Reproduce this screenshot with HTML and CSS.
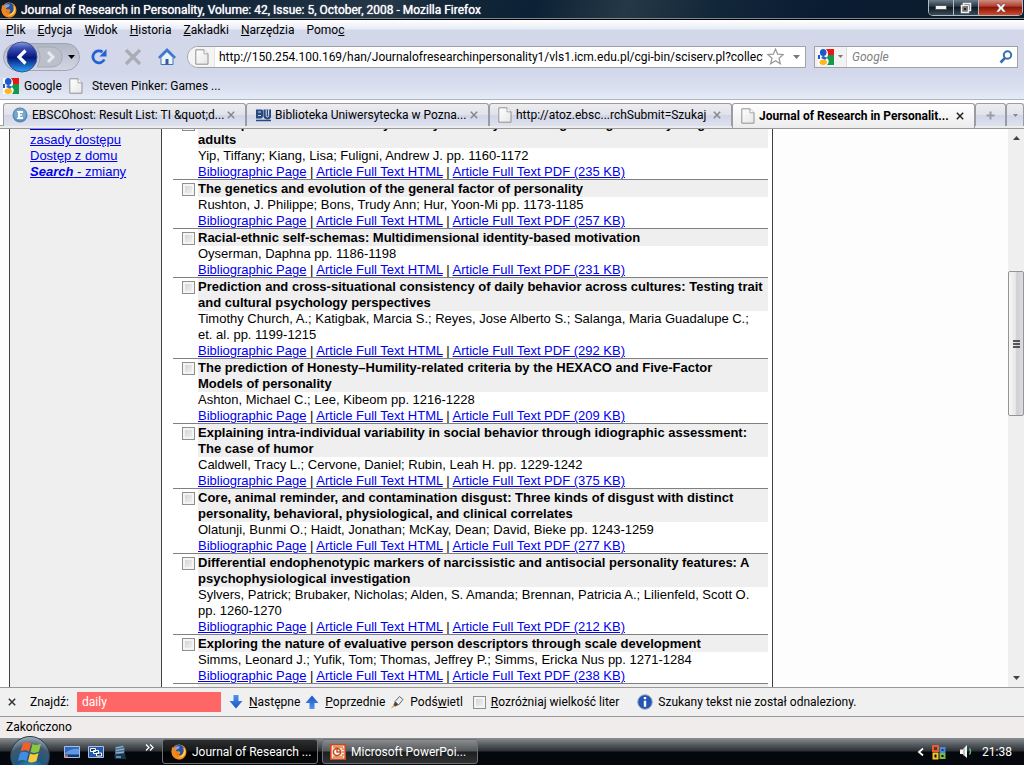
FILE: index.html
```html
<!DOCTYPE html>
<html lang="pl">
<head>
<meta charset="utf-8">
<title>Journal of Research in Personality</title>
<link rel="stylesheet" href="styles.css">
</head>
<body>
<svg width="0" height="0" class="defs" aria-hidden="true">
  <defs>
    <linearGradient id="pg" x1="0" y1="0" x2="1" y2="1"><stop offset="0" stop-color="#fff"/><stop offset="1" stop-color="#e6e6e6"/></linearGradient>
    <radialGradient id="ffg" cx=".6" cy=".2" r=".9"><stop offset="0" stop-color="#ffc83a"/><stop offset=".5" stop-color="#ee7a18"/><stop offset="1" stop-color="#c43c08"/></radialGradient>
    <linearGradient id="blue" x1="0" y1="0" x2="0" y2="1"><stop offset="0" stop-color="#4f95ee"/><stop offset="1" stop-color="#1a4fc0"/></linearGradient>
    <linearGradient id="back" x1="0" y1="0" x2="0" y2="1"><stop offset="0" stop-color="#8ea0dc"/><stop offset=".2" stop-color="#3b4fb4"/><stop offset=".5" stop-color="#0a1a84"/><stop offset=".52" stop-color="#061478"/><stop offset="1" stop-color="#28a8f8"/></linearGradient>
    <radialGradient id="orb" cx=".5" cy="1" r="1"><stop offset="0" stop-color="#3fc0e8"/><stop offset=".45" stop-color="#1c5880"/><stop offset=".75" stop-color="#40586c"/><stop offset="1" stop-color="#a4b4c0"/></radialGradient>
    <symbol id="page" viewBox="0 0 14 16"><path d="M.8.8H9l4 4v10.400H.8z" fill="url(#pg)" stroke="#929292"/><path d="M9 .8v4h4" fill="#fff" stroke="#929292" stroke-width=".8"/></symbol>
    <symbol id="fox" viewBox="0 0 16 16"><circle cx="8" cy="8" r="7.500" fill="url(#ffg)"/><path d="M3.500 3.500Q6-.5 11 1.400Q14 4 13 8.500Q11 12 8 11Q9.800 9.500 8.800 7.500L5.500 7.300Q4 6 6.200 5.200z" fill="#2850a0"/><path d="M4 3Q7 1.500 9 2.600L7.500 5Q5 5 4 7z" fill="#7aa8e0"/><path d="M1 3L3.500 4.800Q2.500 7 4.500 8.500Q4.500 11.500 9 11.800Q13 11.500 13 7Q12.500 5 11.500 3.500Q15.500 5 15 10Q13 15.500 8 15.500Q1 14.500.5 8z" fill="#f08a1c"/><path d="M13 4Q15.500 7 13.500 11Q11 14.500 7 13.500Q13 12 13 4z" fill="#ffd34a"/></symbol>
    <symbol id="goog" viewBox="0 0 16 16"><path d="M0 0h16v16H0z" fill="#fff"/><path d="M8 0h8v6H10Q10 2 8 0z" fill="#e81818"/><path d="M10 6h6v10H9Q13 11 8 8.500Q10 8 10 6z" fill="#129a48"/><path d="M0 6h2v4H0z" fill="#1c58c8"/><ellipse cx="5.200" cy="3.500" rx="3.300" ry="3.500" fill="#1c58c8"/><path d="M5 6.500L9 9L7 11L3 9z" fill="#2a66d0"/><ellipse cx="5.200" cy="13.300" rx="3.700" ry="2.700" fill="#fcb81c"/></symbol>
    <symbol id="x" viewBox="0 0 8 8"><path d="M.8.8l6.400 6.400M7.200.8L.8 7.200" fill="none" stroke="currentColor" stroke-width="1.500"/></symbol>
    <symbol id="tri" viewBox="0 0 7 4"><path d="M0 0h7L3.500 4z" fill="currentColor"/></symbol>
    <symbol id="arrow" viewBox="0 0 14 14"><path d="M4.500 0h5v6h4L7 13.500.5 6h4z" fill="url(#blue)"/></symbol>
  </defs>
</svg>
<div class="window">
  <header class="titlebar">
    <svg class="i16"><use href="#fox"/></svg>
    <h1 class="title">Journal of Research in Personality, Volume: 42, Issue: 5, October, 2008 - Mozilla Firefox</h1>
    <div class="winbtns">
      <button class="wb" aria-label="Minimalizuj"><svg width="12" height="5"><path d="M.5.5h11v4H.5z" fill="#f4f4f4" stroke="#555"/></svg></button>
      <button class="wb" aria-label="Przywróć"><svg width="12" height="12"><path d="M3.500 1.500h7v7h-2v2h-7v-7h2z" fill="#777" stroke="#f0f0f0" stroke-width="1.500"/><path d="M3.500 3.500h5v5" fill="none" stroke="#f0f0f0"/><path d="M4 6h2v2H4z" fill="#222"/></svg></button>
      <button class="wb close" aria-label="Zamknij"><svg width="12" height="10"><path d="M1 1h3l2 2.500L8 1h3L7.800 5 11 9H8L6 6.500 4 9H1l3.200-4z" fill="#fff" stroke="#67453f" stroke-width=".5"/></svg></button>
    </div>
  </header>

  <nav class="menubar">
    <button><u>P</u>lik</button><button><u>E</u>dycja</button><button><u>W</u>idok</button><button><u>H</u>istoria</button><button><u>Z</u>akładki</button><button><u>N</u>arzędzia</button><button>Pomo<u>c</u></button>
  </nav>

  <div class="navbar">
    <div class="backfwd">
      <button class="back" aria-label="Wstecz"><svg width="32" height="32"><circle cx="16" cy="16" r="15" fill="url(#back)" stroke="#3b5090"/><path d="M19.500 9.500l-6.500 6.500 6.500 6.500" fill="none" stroke="#fff" stroke-width="3.200"/></svg></button>
      <button class="fwd" aria-label="Dalej"><svg width="26" height="22"><path d="M0 1h15q10 1 10 10t-10 10H0q6-10 0-20z" fill="#bcc0ca" stroke="#a6aab6"/><path d="M11 6l5 5-5 5" fill="none" stroke="#e8eaf0" stroke-width="3"/></svg></button>
      <button class="hist" aria-label="Historia kart"><svg width="7" height="4"><use href="#tri"/></svg></button>
    </div>
    <button class="tb" aria-label="Odśwież"><svg width="18" height="18"><path d="M12.500 4A6 6 0 1 0 14.300 11.500" fill="none" stroke="#2463d4" stroke-width="2.800"/><path d="M16.500 1v7.500H9.500z" fill="#2463d4"/></svg></button>
    <button class="tb" aria-label="Zatrzymaj"><svg width="18" height="18"><path d="M2 2l14 14M16 2L2 16" stroke="#a9adb6" stroke-width="3.400"/></svg></button>
    <button class="tb" aria-label="Strona startowa"><svg width="18" height="18"><path d="M3 9.500l6-6 6 6V16.500H3z" fill="#eef3fb" stroke="#4474b8"/><path d="M.8 9.800L9 1.800l8.200 8" fill="none" stroke="#3c78d0" stroke-width="2.400"/><path d="M7.500 11h3v5.500h-3z" fill="#315c9c"/></svg></button>
    <div class="urlbar">
      <span class="ident"><svg width="14" height="16"><use href="#page"/></svg></span>
      <input class="urlin" aria-label="Adres" value="http://150.254.100.169/han/Journalofresearchinpersonality1/vls1.icm.edu.pl/cgi-bin/sciserv.pl?collection">
      <button aria-label="Dodaj zakładkę"><svg width="17" height="17"><path d="M8.500 1.200l2.200 5 5.500.5-4.200 3.600 1.300 5.400-4.800-2.900-4.800 2.900L5 10.300.8 6.700l5.500-.5z" fill="#fff" stroke="#999" stroke-width="1.300"/></svg></button>
      <button class="drop" aria-label="Rozwiń"><svg width="7" height="4"><use href="#tri"/></svg></button>
    </div>
    <div class="search">
      <button class="engine" aria-label="Wyszukiwarka"><svg class="i16"><use href="#goog"/></svg><svg width="5" height="3"><use href="#tri"/></svg></button>
      <input class="searchin" aria-label="Szukaj" placeholder="Google">
      <button aria-label="Szukaj"><svg width="14" height="14"><circle cx="8.500" cy="5" r="3.700" fill="none" stroke="#3470b0" stroke-width="2"/><path d="M6 8l-4.500 4.500" stroke="#3470b0" stroke-width="2.600"/></svg></button>
    </div>
  </div>

  <div class="bookmarks">
    <button><svg class="i16"><use href="#goog"/></svg>Google</button>
    <button class="bm2"><svg width="14" height="16"><use href="#page"/></svg>Steven Pinker: Games ...</button>
  </div>

  <div class="tabs" role="tablist">
    <div class="tab" role="tab"><svg class="i16"><circle cx="8" cy="8" r="7.500" fill="#5588b8"/><circle cx="8" cy="7.500" r="6" fill="#79a6cc"/><path d="M5 4h6v2H8v1.200h2.200v1.600H8V10h3v2H5v-1l1-.5v-5L5 5z" fill="#fff"/></svg><span class="tl">EBSCOhost: Result List: TI &amp;quot;d...</span><button class="tc" aria-label="Zamknij kartę"><svg width="8" height="8"><use href="#x"/></svg></button></div>
    <div class="tab" role="tab"><svg class="i16"><path d="M1 2.500h5.500q2 0 1.500 2.500 1 4-1.500 6.500H1z" fill="#29487f"/><path d="M3 5h3M3 8.500h3" stroke="#cfd6e6"/><path d="M8.500 2.500H16v7q0 2.500-3.500 3-3.500-.5-4-3z" fill="#29487f"/><path d="M11.200 2.500v6q0 1.500 1.200 1.500t1.200-1.500v-6" fill="none" stroke="#e4e8f2"/><path d="M1 13.500h15" stroke="#29487f" stroke-width="1.500"/></svg><span class="tl">Biblioteka Uniwersytecka w Pozna...</span><button class="tc" aria-label="Zamknij kartę"><svg width="8" height="8"><use href="#x"/></svg></button></div>
    <div class="tab" role="tab"><svg width="14" height="16"><use href="#page"/></svg><span class="tl">http://atoz.ebsc...rchSubmit=Szukaj</span><button class="tc" aria-label="Zamknij kartę"><svg width="8" height="8"><use href="#x"/></svg></button></div>
    <div class="tab active" role="tab" aria-selected="true"><svg width="14" height="16"><use href="#page"/></svg><span class="tl">Journal of Research in Personalit...</span><button class="tc" aria-label="Zamknij kartę"><svg width="8" height="8"><use href="#x"/></svg></button></div>
    <button class="newtab" aria-label="Nowa karta"><svg width="9" height="9"><path d="M3.500.5h2v3h3v2h-3v3h-2v-3h-3v-2h3z" fill="#999da6"/></svg></button>
    <button class="alltabs" aria-label="Lista kart"><svg width="5" height="3"><use href="#tri"/></svg></button>
  </div>

  <div class="view">
    <div class="doc">
      <aside class="side">
        <a href="#">e-zasoby</a><a href="#">zasady dostępu</a><a href="#">Dostęp z domu</a><a href="#"><b><i>Search</i></b> - zmiany</a>
      </aside>
      <main class="list">
        <article class="art"><input type="checkbox" aria-label="Zaznacz"><div class="body"><h2>Developmental trends in family identity and daily well-being among diverse young<br>adults</h2><p>Yip, Tiffany; Kiang, Lisa; Fuligni, Andrew J. pp. 1160-1172</p><p><a href="#">Bibliographic Page</a> | <a href="#">Article Full Text HTML</a> | <a href="#">Article Full Text PDF (235 KB)</a></p></div></article>
        <article class="art"><input type="checkbox" aria-label="Zaznacz"><div class="body"><h2>The genetics and evolution of the general factor of personality</h2><p>Rushton, J. Philippe; Bons, Trudy Ann; Hur, Yoon-Mi pp. 1173-1185</p><p><a href="#">Bibliographic Page</a> | <a href="#">Article Full Text HTML</a> | <a href="#">Article Full Text PDF (257 KB)</a></p></div></article>
        <article class="art"><input type="checkbox" aria-label="Zaznacz"><div class="body"><h2>Racial-ethnic self-schemas: Multidimensional identity-based motivation</h2><p>Oyserman, Daphna pp. 1186-1198</p><p><a href="#">Bibliographic Page</a> | <a href="#">Article Full Text HTML</a> | <a href="#">Article Full Text PDF (231 KB)</a></p></div></article>
        <article class="art"><input type="checkbox" aria-label="Zaznacz"><div class="body"><h2>Prediction and cross-situational consistency of daily behavior across cultures: Testing trait and cultural psychology perspectives</h2><p>Timothy Church, A.; Katigbak, Marcia S.; Reyes, Jose Alberto S.; Salanga, Maria Guadalupe C.;<br>et. al. pp. 1199-1215</p><p><a href="#">Bibliographic Page</a> | <a href="#">Article Full Text HTML</a> | <a href="#">Article Full Text PDF (292 KB)</a></p></div></article>
        <article class="art"><input type="checkbox" aria-label="Zaznacz"><div class="body"><h2>The prediction of Honesty–Humility-related criteria by the HEXACO and Five-Factor<br>Models of personality</h2><p>Ashton, Michael C.; Lee, Kibeom pp. 1216-1228</p><p><a href="#">Bibliographic Page</a> | <a href="#">Article Full Text HTML</a> | <a href="#">Article Full Text PDF (209 KB)</a></p></div></article>
        <article class="art"><input type="checkbox" aria-label="Zaznacz"><div class="body"><h2>Explaining intra-individual variability in social behavior through idiographic assessment: The case of humor</h2><p>Caldwell, Tracy L.; Cervone, Daniel; Rubin, Leah H. pp. 1229-1242</p><p><a href="#">Bibliographic Page</a> | <a href="#">Article Full Text HTML</a> | <a href="#">Article Full Text PDF (375 KB)</a></p></div></article>
        <article class="art"><input type="checkbox" aria-label="Zaznacz"><div class="body"><h2>Core, animal reminder, and contamination disgust: Three kinds of disgust with distinct personality, behavioral, physiological, and clinical correlates</h2><p>Olatunji, Bunmi O.; Haidt, Jonathan; McKay, Dean; David, Bieke pp. 1243-1259</p><p><a href="#">Bibliographic Page</a> | <a href="#">Article Full Text HTML</a> | <a href="#">Article Full Text PDF (277 KB)</a></p></div></article>
        <article class="art"><input type="checkbox" aria-label="Zaznacz"><div class="body"><h2>Differential endophenotypic markers of narcissistic and antisocial personality features: A psychophysiological investigation</h2><p>Sylvers, Patrick; Brubaker, Nicholas; Alden, S. Amanda; Brennan, Patricia A.; Lilienfeld, Scott O. pp. 1260-1270</p><p><a href="#">Bibliographic Page</a> | <a href="#">Article Full Text HTML</a> | <a href="#">Article Full Text PDF (212 KB)</a></p></div></article>
        <article class="art"><input type="checkbox" aria-label="Zaznacz"><div class="body"><h2>Exploring the nature of evaluative person descriptors through scale development</h2><p>Simms, Leonard J.; Yufik, Tom; Thomas, Jeffrey P.; Simms, Ericka Nus pp. 1271-1284</p><p><a href="#">Bibliographic Page</a> | <a href="#">Article Full Text HTML</a> | <a href="#">Article Full Text PDF (238 KB)</a></p></div></article>
        <div class="art next"><div class="body"><h2>&nbsp;</h2></div></div>
      </main>
    </div>
    <div class="scroll">
      <svg width="7" height="4" class="up"><use href="#tri"/></svg>
      <div class="track"><div class="thumb"><i></i><i></i><i></i></div></div>
      <svg width="7" height="4"><use href="#tri"/></svg>
    </div>
  </div>

  <div class="findbar">
    <button class="fx" aria-label="Zamknij"><svg width="8" height="8"><use href="#x"/></svg></button>
    <label for="find" class="fl">Znajdź:</label>
    <input id="find" class="findin" value="daily">
    <button class="fb"><svg width="14" height="14"><use href="#arrow"/></svg><span><u>N</u>astępne</span></button>
    <button class="fb"><svg width="14" height="14" class="up"><use href="#arrow"/></svg><span><u>P</u>oprzednie</span></button>
    <button class="fb"><svg width="14" height="14"><path d="M5 6.500L9.500 1.500l3.500 3L8.500 10z" fill="#eee" stroke="#666"/><path d="M5 6.500L8.500 10 5 11.500 3.500 10z" fill="#444"/><path d="M3.500 10L5 11.500.8 13.500z" fill="#f0a020"/></svg><span>Podś<u>w</u>ietl</span></button>
    <label class="case"><input type="checkbox"><span><u>R</u>ozróżniaj wielkość liter</span></label>
    <span class="info"><svg class="i16"><circle cx="8" cy="8" r="7.300" fill="#2454b4" stroke="#a0aec8"/><path d="M8 3v2.200M8 6.700v6" stroke="#fff" stroke-width="2.400"/></svg>Szukany tekst nie został odnaleziony.</span>
  </div>
  <div class="status">Zakończono</div>

  <footer class="taskbar">
    <button class="orb" aria-label="Start"><svg width="44" height="29" viewBox="0 0 44 29"><circle cx="22" cy="20" r="19.500" fill="url(#orb)" stroke="#273746"/><path d="M15 7.500q4-2.500 8 0l-2 8q-4-2.500-8.500 0z" fill="#f0602c"/><path d="M24.500 8q4.500 2 8.500-.5l-2 8q-4.500 2.500-8.500.5z" fill="#8cc63c"/><path d="M12 17q4-2.500 8.500 0l-2 8q-4-2-8.500 0z" fill="#3f8ce0"/><path d="M22 17.500q4.500 2 8.500-.5l-2 8q-4.500 2.500-8.500.5z" fill="#fcca38"/></svg></button>
    <div class="quick">
      <button aria-label="Pulpit"><svg class="i16"><path d="M.5 2.500h15v11H.5z" fill="#2c68c4" stroke="#a8c0e0"/><path d="M1 9q7-5 14-4v5H1z" fill="#5f98dc"/><path d="M1 11h14v2H1z" fill="#17386e"/><path d="M1 11h3v2H1z" fill="#e05838"/></svg></button>
      <button aria-label="Przełącz okna"><svg class="i16"><path d="M.5 2.500h15v11H.5z" fill="#2558a8" stroke="#a8c0e0"/><path d="M2.500 4.500h5v3h-5zM5.500 6.500h5v3h-5zM8.500 9h5v3h-5z" fill="#17386e" stroke="#fff"/></svg></button>
      <button aria-label="Program"><svg class="i16"><path d="M3 3l8-2 2 3-1 7-9 1z" fill="#4b6c88"/><path d="M4 4l7-1.500M4 6.500l8-1.500M4 9l8-1" stroke="#9fc0dc"/><path d="M2 10.500l11-1 1 5.500H3z" fill="#203448"/><path d="M4 13h5" stroke="#5ab0f0" stroke-width="1.500"/></svg></button>
      <button class="more" aria-label="Więcej"><svg width="9" height="7"><path d="M1 .5l3 3-3 3M5 .5l3 3-3 3" fill="none" stroke="#fff" stroke-width="1.300"/></svg></button>
    </div>
    <button class="task cur"><svg class="i16"><use href="#fox"/></svg>Journal of Research ...</button>
    <button class="task"><svg class="i16"><path d="M.8.8h14.400v14.400H.8z" fill="#fbe7dc" stroke="#c84818" stroke-width="1.600"/><circle cx="7" cy="8" r="3.600" fill="#fff" stroke="#c84818" stroke-width="1.600"/><path d="M7 4.500V8h3.500" fill="none" stroke="#c84818" stroke-width="1.400"/><path d="M12 5h2M12 8h2M12 11h2M3 3h10M3 13h10" stroke="#c84818"/></svg>Microsoft PowerPoi...</button>
    <div class="tray">
      <svg width="7" height="8"><path d="M6 .5L2 4l4 3.500" fill="none" stroke="#fff" stroke-width="1.800"/></svg>
      <svg class="i16"><path d="M2 2h5v5H2z" fill="none" stroke="#f05828" stroke-width="2"/><path d="M9.500 4h4v4h-4z" fill="none" stroke="#3f8ce0" stroke-width="2"/><path d="M2.500 9.500h4v5h-4z" fill="none" stroke="#fcc428" stroke-width="2"/><path d="M9.500 10h4v4h-4z" fill="none" stroke="#7cbc3c" stroke-width="2"/></svg>
      <svg class="i16 vol"><path d="M1 5.500h2.500L8 1v13L3.500 10H1z" fill="#f4f4f4"/><path d="M5 4v8" stroke="#8a8a8a"/><path d="M10.500 4.500q2 3 0 6" fill="none" stroke="#58b870" stroke-width="1.500"/></svg>
      <time>21:38</time>
    </div>
  </footer>
</div>
</body>
</html>
```
FILE: styles.css
```css
* { box-sizing: border-box; }
body { margin: 0; background: #fff; color: #000; font: 12px/16px Roboto, "Noto Sans", sans-serif; }
button { border: 0; padding: 0; background: none; font: inherit; color: inherit; display: flex; align-items: center; white-space: nowrap; }
input { font: inherit; color: inherit; min-width: 0; }
svg { display: block; flex: none; }
h1, h2, p { margin: 0; font-size: inherit; }
.defs { position: absolute; }
.i16 { width: 16px; height: 16px; }
.up { transform: rotate(180deg); }
.window { display: flex; flex-direction: column; height: 100vh; overflow: hidden; }

.titlebar { display: flex; align-items: center; gap: 4px; height: 20px; flex: none; padding-left: 1px; color: #fff; background: linear-gradient(110deg, #101c28, #0c2034 16%, #263848 38%, #14283a 42%, #0d2136 52%, #243846 61%, #12263a 70%, #0a1c32 80%, #0c1c2c); border-bottom: 1px solid #000; box-shadow: inset 0 -1px #7a8894; }
.title { font-weight: 400; flex: 1; white-space: nowrap; overflow: hidden; text-shadow: 0 0 1px #fff; }
.winbtns { display: flex; align-self: flex-start; height: 16px; margin-right: 1px; border: 1px solid #b0bcc8; border-top: 0; border-radius: 0 0 5px 5px; overflow: hidden; }
.wb { width: 25px; justify-content: center; background: linear-gradient(#6c7c88, #25323e 45%, #0c1a26 50%, #3c4c5a); border-right: 1px solid #b0bcc8; }
.wb.close { width: 43px; border: 0; background: linear-gradient(#d08c80, #b04434 40%, #8c1408 50%, #d04c2c); }

.menubar { display: flex; gap: 12px; align-items: center; height: 20px; flex: none; padding-left: 6px; background: linear-gradient(#fff, #e9ecf5 45%, #d2d7ea 50%); }
.navbar { display: flex; align-items: center; height: 33px; flex: none; padding: 0 6px 0 3px; background: #d2d7ea; }
.backfwd { display: flex; align-items: center; height: 28px; width: 77px; border: 1px solid #a0a5b5; border-radius: 14px; background: linear-gradient(#b2b7c6, #d2d6e2); color: #000; margin-right: 9px; }
.back { margin-left: 2px; }
.fwd { margin-left: -1px; }
.hist { margin-left: 5px; }
.tb { width: 34px; padding-left: 1px; }
.urlbar { display: flex; align-items: center; flex: 1; height: 22px; background: #fff; border: 1px solid #a0a2a8; border-radius: 11px 0 0 11px; overflow: hidden; min-width: 0; margin-left: -4px; }
.ident { display: flex; align-items: center; height: 100%; padding: 0 5px 0 7px; background: #f4f4f5; border-right: 1px solid #e4e4e4; }
.urlin { flex: 1; border: 0; padding: 0; margin: 0 4px 0 4px; background: transparent; outline: 0; }
.drop { color: #777; margin: 0 5px 0 9px; }
.search { display: flex; align-items: center; width: 204px; height: 22px; margin-left: 8px; background: #fff; border: 1px solid #a0a2a8; padding-right: 4px; }
.engine { gap: 4px; height: 100%; padding: 0 3px; background: #f2f2f4; color: #777; border-right: 1px solid #ddd; }
.searchin { flex: 1; border: 0; padding: 0 0 0 5px; font-style: italic; outline: 0; }
.searchin::placeholder { color: #808080; opacity: 1; }
.bookmarks { display: flex; align-items: center; gap: 7px; height: 27px; flex: none; padding-left: 3px; background: linear-gradient(#d2d7ea, #dbe0f0 60%, #e6ebf7); border-bottom: 1px solid #b0b4c0; }
.bookmarks button { gap: 5px; }
.bookmarks .bm2 { gap: 9px; }

.tabs { display: flex; height: 29px; flex: none; padding: 3px 0 0 3px; border-bottom: 1px solid #999; background: linear-gradient(#fff 25px, #a0a0a0 25px, #a0a0a0 26px, #ececec 26px); }
.tab, .newtab, .alltabs { height: 23px; border: 1px solid #9a9ca4; border-bottom: 0; border-radius: 3px 3px 0 0; background: linear-gradient(#ededf0, #e0e2ea 50%, #d1d5e6 52%, #dde1ef); }
.tab { display: flex; align-items: center; flex: 0 1 243px; padding: 0 10px 0 8px; min-width: 0; }
.tl { flex: 1; margin: 0 3px 0 4px; white-space: nowrap; overflow: hidden; }
.tc { color: #85878c; }
.active { height: 25px; background: linear-gradient(#fff, #ececec); font-weight: 700; }
.active .tc { color: #222; }
.newtab { width: 31px; justify-content: center; }
.alltabs { flex: 1; justify-content: center; color: #85878c; }

.view { display: flex; flex: 1; min-height: 0; font: 13px/16px "Liberation Sans", Arial, sans-serif; }
.doc { display: flex; flex: 1; height: 100%; overflow: hidden; padding-left: 9px; background: #fdfdfd; }
.side { width: 153px; flex: none; padding-left: 20px; background: #efefef; border: solid #404040; border-width: 0 1px; }
.side a { display: block; }
.side a:first-child { margin-top: -13px; }
a { color: #00e; text-decoration: underline; }
.list { width: 611px; flex: none; height: max-content; margin-top: -14px; padding: 0 4px 0 11px; background: #fff; border-right: 1px solid #404040; }
.art { display: flex; border-bottom: 1px solid #808080; }
.body { flex: 1; min-width: 0; margin-bottom: -1px; }
.art h2 { padding-top: 1px; background: #efefef; font-weight: 700; }
input[type=checkbox] { appearance: none; flex: none; width: 13px; height: 13px; margin: 3px 3px 0 9px; border: 1px solid #8e8f8f; background: linear-gradient(135deg, #cbcfd5, #f6f6f6); box-shadow: inset 0 0 0 2px #f4f4f4; }
.next { padding-left: 25px; }
.scroll { display: flex; flex-direction: column; align-items: center; width: 16px; flex: none; padding: 7px 0; background: #efefef; color: #444; }
.track { flex: 1; width: 100%; padding-top: 131px; }
.thumb { display: flex; flex-direction: column; justify-content: center; align-items: center; gap: 1px; height: 145px; border: 1px solid #949494; border-radius: 2px; background: linear-gradient(90deg, #f6f6f6, #e8e8ea 45%, #cfcfd4 55%, #dcdce0); }
.thumb i { width: 7px; height: 2px; background: #555; }

.findbar { display: flex; align-items: center; height: 30px; flex: none; padding-left: 8px; background: #f0f0f0; border-top: 1px solid #999; border-bottom: 1px solid #999; white-space: nowrap; }
.fx { margin-right: 14px; color: #333; }
.fl { width: 38px; }
.findin { width: 144px; height: 20px; margin: 0 8px 0 9px; border: 0; padding: 0 5px; background: #f66; color: #fff; }
.fb { gap: 6px; margin-right: 5px; }
.case { display: flex; align-items: center; gap: 5px; margin: 0 18px 0 5px; }
.case input { margin: 0; }
.info { display: flex; align-items: center; gap: 5px; }
.status { height: 21px; flex: none; padding: 2px 6px; background: #f0ecec; }

.taskbar { display: flex; align-items: center; height: 27px; flex: none; color: #fff; background: linear-gradient(#8a8e92, #555a5e 25%, #2c3034 48%, #04080c 52%, #05090f); }
.orb { width: 44px; height: 29px; margin: -2px 12px 0 8px; }
.quick { display: flex; gap: 8px; width: 98px; }
.more { align-self: flex-start; margin-left: 9px; }
.task { width: 156px; height: 25px; gap: 5px; margin-right: 4px; padding-left: 7px; border: 1px solid #6d7174; border-radius: 3px; background: linear-gradient(#8a8c8e, #55585a 48%, #1c1e20 52%, #303234); }
.task.cur { background: linear-gradient(#2c2e30, #141618 48%, #000 52%, #08090a); padding-left: 8px; }
.tray { display: flex; align-items: center; margin-left: auto; gap: 7px; padding-right: 12px; }
.vol { margin-left: 5px; }
```
